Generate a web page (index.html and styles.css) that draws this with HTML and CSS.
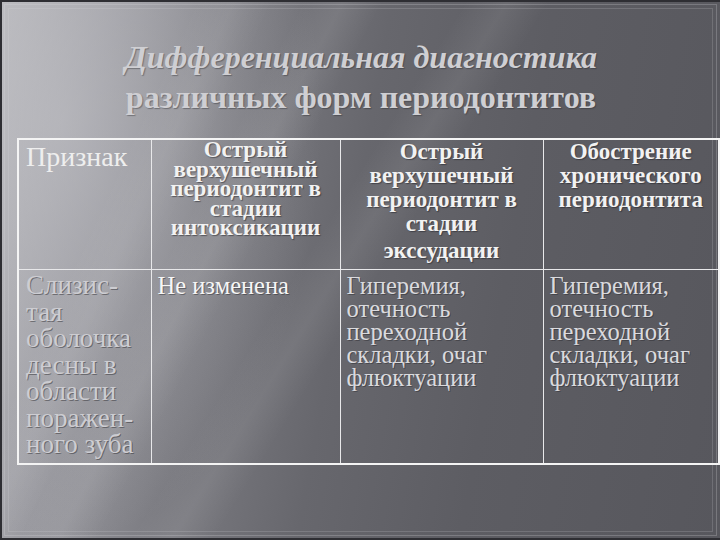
FILE: index.html
```html
<!DOCTYPE html>
<html lang="ru">
<head>
<meta charset="utf-8">
<title>Дифференциальная диагностика</title>
<link rel="stylesheet" href="styles.css">
</head>
<body>
<div class="slide">
  <div class="streaks"></div>
  <div class="frame"></div>
  <h1 class="title">
    <span class="title-line1">Дифференциальная диагностика</span>
    <span class="title-line2">различных форм периодонтитов</span>
  </h1>
  <table class="grid">
    <colgroup>
      <col class="c1"><col class="c2"><col class="c3"><col class="c4">
    </colgroup>
    <tr class="head">
      <td class="h-sign">Признак</td>
      <td class="h-bold h-tight">Острый верхушечный периодонтит в стадии интоксикации</td>
      <td class="h-bold">Острый верхушечный периодонтит в стадии <span class="last">экссудации</span></td>
      <td class="h-bold">Обострение хронического периодонтита</td>
    </tr>
    <tr class="body">
      <td class="b-sign">Слизис-<br>тая<br>оболочка<br>десны в<br>области<br>поражен-<br>ного зуба</td>
      <td class="b-text b-bright">Не изменена</td>
      <td class="b-text">Гиперемия, отечность переходной складки, очаг флюктуации</td>
      <td class="b-text">Гиперемия, отечность переходной складки, очаг флюктуации</td>
    </tr>
  </table>
</div>
</body>
</html>
```
FILE: styles.css
```css
html, body {
  margin: 0;
  padding: 0;
  background: #3a3a40;
}
.slide {
  position: relative;
  width: 720px;
  height: 540px;
  overflow: hidden;
  display: flex;
  flex-direction: column;
  box-sizing: border-box;
  border-left: 2px solid #2e2e33;
  border-top: 2px solid #2e2e33;
  border-bottom: 2px solid #2e2e33;
  background:
    radial-gradient(ellipse 260px 420px at 60px 120px, rgba(200,200,205,0.5), rgba(200,200,205,0) 100%),
    linear-gradient(100deg, #b6b6ba 0%, #9a9aa0 14%, #7c7c82 30%, #67676d 48%, #5d5d63 68%, #57575d 100%);
  font-family: "Liberation Serif", "Times New Roman", serif;
}
.streaks {
  position: absolute;
  inset: 0;
  pointer-events: none;
  background:
    linear-gradient(118deg, rgba(255,255,255,0) 30%, rgba(255,255,255,0.08) 34%, rgba(255,255,255,0) 38%),
    linear-gradient(122deg, rgba(255,255,255,0) 44%, rgba(255,255,255,0.07) 48%, rgba(255,255,255,0) 52%),
    linear-gradient(115deg, rgba(255,255,255,0) 20%, rgba(255,255,255,0.06) 24%, rgba(255,255,255,0) 28%);
}
.frame {
  position: absolute;
  inset: 2px 3px 2px 2px;
  border: 1px solid rgba(220,220,225,0.25);
  pointer-events: none;
}
.frame::after {
  content: "";
  position: absolute;
  inset: 3px;
  border: 1px solid rgba(220,220,225,0.18);
}
.title {
  position: relative;
  margin: 35px 0 0 0;
  font-weight: bold;
  font-size: 32px;
  line-height: 40px;
  text-align: center;
  color: #cfcfd3;
  text-shadow: 1px 1px 1px rgba(40,40,45,0.4);
}
.title-line1 {
  display: block;
  font-style: italic;
}
.title-line2 {
  display: block;
}
.grid {
  position: relative;
  margin: 21px 0 0 15px;
  width: 703px;
  border-collapse: collapse;
  border: 2px solid #f4f4f4;
  table-layout: fixed;
}
.c1 { width: 133px; }
.c2 { width: 189px; }
.c3 { width: 203px; }
.c4 { width: 176px; }
.grid td {
  border: 1px solid #e8e8ea;
  vertical-align: top;
  padding: 0 4px;
}
.head td {
  height: 127px;
}
.h-sign {
  font-size: 28px;
  line-height: 30px;
  color: #eeeeee;
  padding-top: 2px !important;
  padding-left: 7px !important;
}
.h-bold {
  font-weight: bold;
  font-size: 23px;
  line-height: 24px;
  text-align: center;
  color: #f2f2f2;
  text-shadow: 1px 1px 1px rgba(30,30,35,0.5);
}
.h-tight {
  line-height: 19.5px;
}
.last {
  display: block;
  margin-top: 3px;
}
.body td {
  height: 189px;
}
.b-sign {
  font-size: 27px;
  line-height: 26.5px;
  color: #cdcdd2;
  padding-left: 7px !important;
  padding-top: 2px !important;
  text-shadow: 1px 1px 0 rgba(50,50,55,0.5);
}
.b-text {
  font-size: 24.5px;
  line-height: 23px;
  color: #dadade;
  padding-top: 4px !important;
  padding-left: 6px !important;
  text-shadow: 1px 1px 0 rgba(40,40,45,0.45);
}
.b-bright {
  color: #f6f6f6;
}
```
